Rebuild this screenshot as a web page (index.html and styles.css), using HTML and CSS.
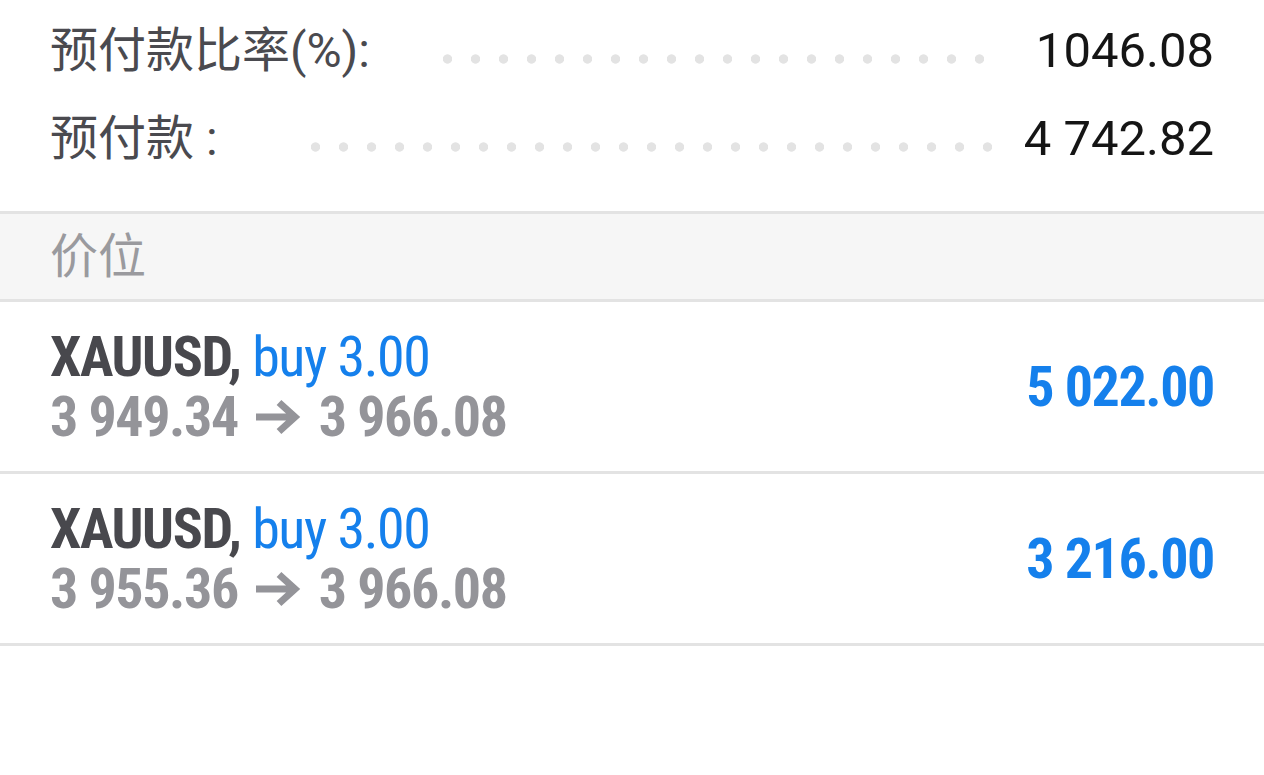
FILE: index.html
```html
<!DOCTYPE html>
<html lang="zh-CN">
<head>
<meta charset="utf-8">
<title>价位</title>
<link rel="stylesheet" href="styles.css">
</head>
<body>
<div class="summary">
  <div class="srow srow-ratio">
    <span class="label">预付款比率(%):</span>
    <span class="dots"></span>
    <span class="value">1046.08</span>
  </div>
  <div class="srow srow-margin">
    <span class="label">预付款 :</span>
    <span class="dots"></span>
    <span class="value">4 742.82</span>
  </div>
</div>
<div class="section">价位</div>
<div class="trades">
  <div class="trade">
    <div class="info">
      <div class="line1"><span class="sym">XAUUSD,</span> <span class="side">buy 3.00</span></div>
      <div class="line2"><span>3 949.34</span><svg class="arrow" viewBox="0 0 46 36" aria-label="→"><path d="M0 18H40M23 3.5L39 18L23 32.5"/></svg><span>3 966.08</span></div>
    </div>
    <div class="profit">5 022.00</div>
  </div>
  <div class="trade">
    <div class="info">
      <div class="line1"><span class="sym">XAUUSD,</span> <span class="side">buy 3.00</span></div>
      <div class="line2"><span>3 955.36</span><svg class="arrow" viewBox="0 0 46 36" aria-label="→"><path d="M0 18H40M23 3.5L39 18L23 32.5"/></svg><span>3 966.08</span></div>
    </div>
    <div class="profit">3 216.00</div>
  </div>
</div>
</body>
</html>
```
FILE: styles.css
```css
html, body {
  margin: 0;
  padding: 0;
  background: #ffffff;
}
body {
  font-family: Roboto, "Noto Sans CJK SC", sans-serif;
  width: 1264px;
}
.summary {
  padding: 7px 50px 28px 50px;
}
.srow {
  display: grid;
  height: 88px;
  align-items: center;
}
.srow-ratio {
  grid-template-columns: 392.5px 1fr 224px;
}
.srow-margin {
  grid-template-columns: 261px 1fr 218px;
}
.label {
  font-size: 48px;
  color: #4a4a4f;
  white-space: nowrap;
  line-height: 88px;
}
.value {
  font-size: 49px;
  color: #151515;
  text-align: right;
  white-space: nowrap;
  line-height: 88px;
}
.dots {
  height: 10px;
  margin-top: 16px;
  background-image: radial-gradient(circle at 4.5px 5px, #e3e3e3 4.3px, rgba(227,227,227,0) 5px);
  background-size: 28px 10px;
  background-repeat: repeat-x;
  background-position: left top;
}
.section {
  border-top: 3px solid #e3e3e3;
  border-bottom: 3px solid #e3e3e3;
  background: #f6f6f6;
  height: 85px;
  line-height: 85px;
  padding-left: 50px;
  font-size: 48px;
  color: #9a9a9e;
}
.trade {
  display: flex;
  align-items: center;
  justify-content: space-between;
  padding: 25px 50px 24px 50px;
  border-bottom: 3px solid #e3e3e3;
}
.info, .profit {
  font-size: 56px;
  line-height: 60px;
  font-stretch: condensed;
  letter-spacing: -1.4px;
  white-space: nowrap;
}
.sym {
  font-weight: 700;
  color: #48484d;
}
.side {
  color: #1580ec;
}
.line2 {
  display: flex;
  align-items: center;
  font-weight: 700;
  color: #949499;
}
.arrow {
  width: 46px;
  height: 36px;
  margin: 0 17px 0 18px;
  fill: none;
  stroke: #949499;
  stroke-width: 7;
  stroke-linejoin: miter;
}
.profit {
  font-weight: 700;
  color: #1580ec;
}
```
